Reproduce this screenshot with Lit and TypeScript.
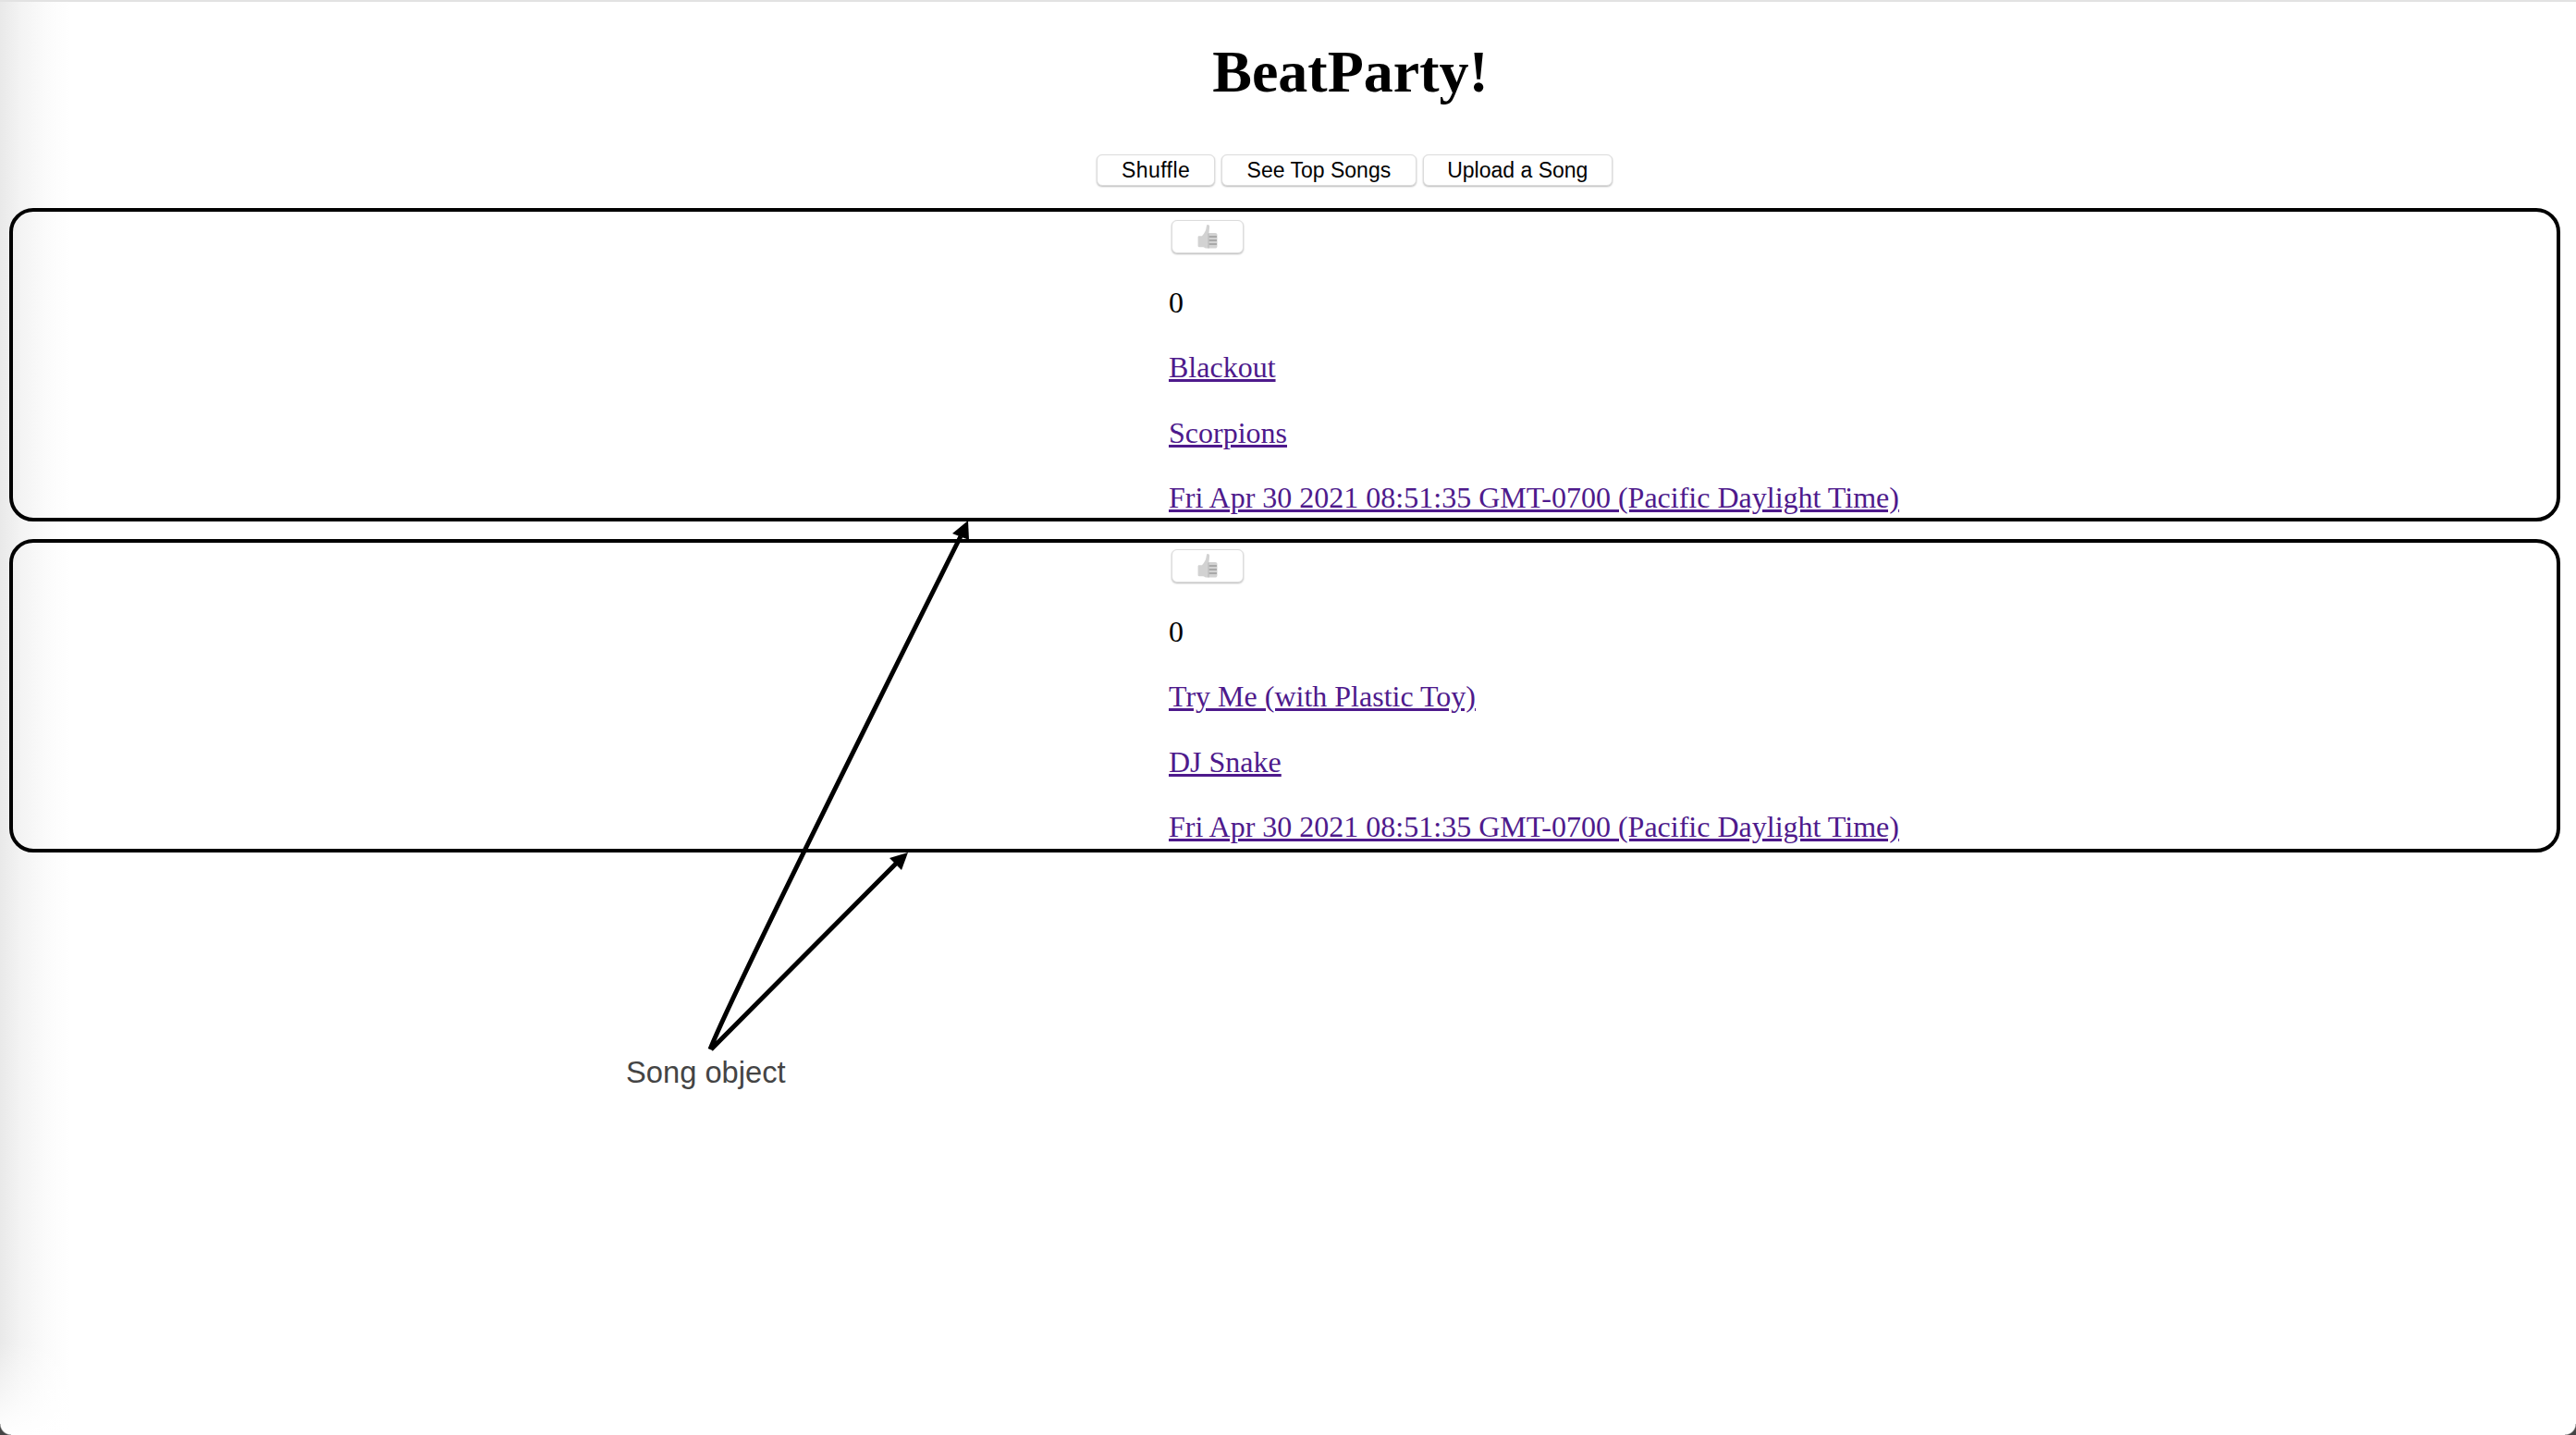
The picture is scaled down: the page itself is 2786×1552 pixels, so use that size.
import { LitElement, css, html, svg } from 'lit';
import { customElement } from 'lit/decorators.js';

interface Song {
  title: string;
  artist: string;
  date: string;
}

const SONGS: Song[] = [
  { title: 'Blackout', artist: 'Scorpions', date: 'Fri Apr 30 2021 08:51:35 GMT-0700 (Pacific Daylight Time)' },
  { title: 'Try Me (with Plastic Toy)', artist: 'DJ Snake', date: 'Fri Apr 30 2021 08:51:35 GMT-0700 (Pacific Daylight Time)' },
];

const thumb = svg`
  <svg class="thumb" viewBox="0 0 22 29" width="22" height="29" aria-hidden="true">
    <path d="M10.500 1c1.800-.4 2.800.8 2.600 2.600l-.6 6.400h6.800c1.300 0 2.200.9 2.200 2.100v12.200c0 1.400-.9 2.300-2.300 2.300H10c-1.600 0-2.500-.9-3.700-1.300H1.800c-.7 0-1.200-.5-1.200-1.200V14.500c0-.8.500-1.300 1.200-1.300h3.100c1.500-1.600 3.100-3.800 4.100-6.200.7-1.800.7-4.800 1.500-6z" fill="#d2d2d2"/>
    <path d="M12.500 14h8.500M12.500 18h8.500M12.500 22h8.500" stroke="#9c9c9c" stroke-width="1.500" fill="none"/>
    <path d="M12 10.500v16" stroke="#b8b8b8" stroke-width="1" fill="none"/>
  </svg>
`;

@customElement('app-root')
export class AppRoot extends LitElement {
  static styles = css`
    :host {
      display: block;
      position: relative;
      box-sizing: border-box;
      height: 1552px;
      overflow: hidden;
      border-top: 2px solid #e2e2e2;
      background:
        linear-gradient(0deg, #fff 0, rgba(255, 255, 255, 0) 100px) left bottom / 80px 100px no-repeat,
        linear-gradient(90deg, #e9e9e9 0, #f4f4f4 24px, #fbfbfb 50px, #fff 76px);
      font-family: 'Liberation Serif', 'Times New Roman', serif;
      color: #000;
    }
    :host::before,
    :host::after {
      content: '';
      position: absolute;
      bottom: 0;
      width: 12px;
      height: 12px;
    }
    :host::before {
      left: 0;
      background: radial-gradient(circle at 100% 0, transparent 11px, #444 12.500px);
    }
    :host::after {
      right: 0;
      background: radial-gradient(circle at 0 0, transparent 11px, #444 12.500px);
    }
    h1 {
      margin: 0;
      padding: 39px 0 0 135px;
      font-size: 64px;
      line-height: 74px;
      font-weight: 700;
      text-align: center;
    }
    .actions {
      display: flex;
      justify-content: center;
      gap: 7px;
      margin-top: 52px;
      padding-left: 144px;
    }
    button {
      box-sizing: border-box;
      height: 34px;
      padding: 0 26.500px;
      border: 1px solid #dcdcdc;
      border-radius: 6px;
      background: #fff;
      box-shadow: 0 1px 2px rgba(0, 0, 0, 0.28);
      font-family: 'Liberation Sans', Arial, sans-serif;
      font-size: 23px;
      font-variant-ligatures: none;
      color: #000;
    }
    .shuffle {
      padding: 0 26px;
      letter-spacing: 0.4px;
    }
    .upload {
      padding: 0 25.500px;
    }
    .songs {
      display: flex;
      flex-direction: column;
      gap: 19px;
      margin: 24px 17px 0 10px;
    }
    .song {
      box-sizing: border-box;
      height: 339px;
      padding: 9px 0 0 1250px;
      border: 4px solid #000;
      border-radius: 26px;
    }
    .song + .song {
      padding-top: 7px;
    }
    .like {
      display: flex;
      align-items: center;
      justify-content: center;
      width: 78px;
      height: 36px;
      margin-left: 3px;
      padding: 0;
    }
    .thumb {
      display: block;
    }
    p {
      margin: 33.500px 0 0;
      font-size: 32px;
      line-height: 37px;
    }
    .like + p {
      margin-top: 34.500px;
    }
    a {
      color: #4e1a8c;
      text-decoration: underline;
    }
    .notes {
      position: absolute;
      top: -2px;
      left: 0;
      pointer-events: none;
    }
    .caption {
      position: absolute;
      left: 677px;
      top: 1139px;
      font-family: 'Liberation Sans', Arial, sans-serif;
      font-size: 32.700px;
      line-height: 37px;
      color: #444;
    }
  `;

  private renderSong(song: Song) {
    return html`
      <section class="song">
        <button class="like">${thumb}</button>
        <p>0</p>
        <p><a href="#">${song.title}</a></p>
        <p><a href="#">${song.artist}</a></p>
        <p><a href="#">${song.date}</a></p>
      </section>
    `;
  }

  render() {
    return html`
      <h1>BeatParty!</h1>
      <div class="actions">
        <button class="shuffle">Shuffle</button>
        <button>See Top Songs</button>
        <button class="upload">Upload a Song</button>
      </div>
      <div class="songs">${SONGS.map((song) => this.renderSong(song))}</div>
      <svg class="notes" width="2786" height="1552" viewBox="0 0 2786 1552" aria-hidden="true">
        <path d="M768 1135Q790 1078 1039 580M769 1135L969 934" stroke="#000" stroke-width="5" fill="none"/>
        <path d="M1047 563L1030 577L1048 584z" fill="#000"/>
        <path d="M982 922L962 928L975 941z" fill="#000"/>
      </svg>
      <div class="caption">Song object</div>
    `;
  }
}
